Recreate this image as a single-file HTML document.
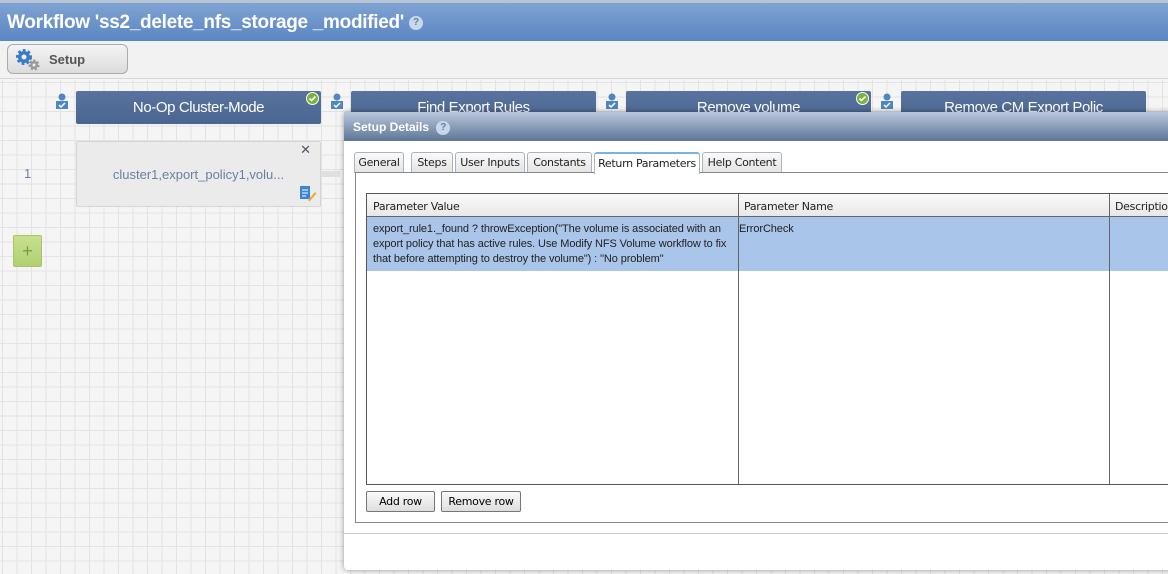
<!DOCTYPE html>
<html><head><style>
*{box-sizing:border-box;margin:0;padding:0}
body{width:1168px;height:574px;overflow:hidden;position:relative;font-family:"Liberation Sans",sans-serif;background:#f4f4f4}
.hdr{position:absolute;left:0;top:0;width:1168px;height:41px;background:linear-gradient(#7fa3d3,#5b86c2);border-top:3px solid #b7c4d4}
.hdr h1{position:absolute;left:7px;top:9px;color:#fff;font-size:19px;font-weight:bold;letter-spacing:-0.3px}
.q{display:inline-block;width:14px;height:14px;border-radius:50%;background:#c8d8ea;color:#5c7fa8;font-size:10px;font-weight:bold;text-align:center;line-height:14px;vertical-align:middle;letter-spacing:0}
.tb{position:absolute;left:0;top:41px;width:1168px;height:38px;background:#f2f2f2;border-bottom:1px solid #d8d8d8}
.setup{position:absolute;left:7px;top:3px;width:121px;height:30px;border:1px solid #aaa;border-radius:6px;background:linear-gradient(#f4f4f4,#dcdcdc);font-weight:bold;font-size:13px;color:#555}
.grid{position:absolute;left:0;top:80px;width:1168px;height:494px;background-color:#f5f5f5;background-image:linear-gradient(to right,#e3e3e3 1px,transparent 1px),linear-gradient(#e3e3e3 1px,transparent 1px);background-size:14.5px 14.5px;background-position:2px 2px}
.step{position:absolute;top:91px;height:33px;background:linear-gradient(#58749e,#4a6590);border-radius:2px;color:#fff;font-size:15px;text-align:center;line-height:34px;letter-spacing:-0.4px}
.usr{position:absolute;top:93px;width:14px;height:16px}
.ok{position:absolute;top:1px;right:2px;width:13px;height:13px}
.card{position:absolute;left:76px;top:141px;width:245px;height:66px;background:#ebebeb;border:1px solid #d5d5d5;border-radius:2px;color:#6b7fa0;font-size:13px;text-align:center;line-height:66px}
.dlg{position:absolute;left:344px;top:112px;width:830px;height:458px;background:#fff;box-shadow:0 0 6px rgba(0,0,0,.4);border-radius:4px 0 0 4px}
.dt{height:29px;background:linear-gradient(#b9c7da,#5d7598);color:#fff;font-size:12px;font-weight:bold;padding:8px 9px}
.tab{position:absolute;top:40px;height:21px;border:1px solid #a8b4c0;border-bottom:none;border-radius:3px 3px 0 0;background:linear-gradient(#fafafa,#e3e3e3);font-size:11px;color:#222;text-align:center;line-height:20px;font-family:"DejaVu Sans","Liberation Sans",sans-serif;letter-spacing:-.3px}
.panel{position:absolute;left:11px;top:60px;width:830px;height:351px;border:1px solid #888}
.tbl{position:absolute;left:10px;top:20px;width:830px;height:292px;border:1px solid #555;font-size:11px;color:#222;font-family:"DejaVu Sans","Liberation Sans",sans-serif;letter-spacing:-.3px}
.th{position:absolute;top:0;height:23px;background:linear-gradient(#fafafa,#e8e8e8);border-bottom:1px solid #666;padding:6px 6px}
.vl{position:absolute;top:0;width:1px;height:290px;background:#666}
.sel{position:absolute;left:0;top:23px;width:830px;height:54px;background:#a9c5ea}
.btn{position:absolute;top:318px;height:21px;border:1px solid #777;border-radius:2px;background:linear-gradient(#fafafa,#dedede);font-size:11px;text-align:center;line-height:19px;font-family:"DejaVu Sans","Liberation Sans",sans-serif;letter-spacing:-.3px}
.val{position:absolute;left:6px;top:28px;line-height:15px;white-space:nowrap;font-family:"Liberation Sans",sans-serif;font-size:11px;letter-spacing:-0.1px}
</style></head><body>
<div class="hdr"><h1>Workflow 'ss2_delete_nfs_storage _modified' <span class="q">?</span></h1></div>
<div class="tb"><div class="setup">
<svg style="position:absolute;left:6px;top:2px" width="28" height="26"><circle cx="10" cy="10" r="6" fill="#3a7bc8" stroke="#3a7bc8" stroke-width="4" stroke-dasharray="2.5 2"/><circle cx="10" cy="10" r="2.5" fill="#eee"/><circle cx="20" cy="18" r="4" fill="#999" stroke="#999" stroke-width="3" stroke-dasharray="2 1.6"/><circle cx="20" cy="18" r="1.5" fill="#eee"/></svg>
<span style="position:absolute;left:41px;top:7px">Setup</span></div></div>
<div class="grid"></div>
<svg class="usr" style="left:55px" viewBox="0 0 14 16"><circle cx="7" cy="4" r="3.5" fill="#4f86c0"/><rect x="1" y="8" width="12" height="8" fill="#4f86c0"/><path d="M4 12l2 2 4-4" stroke="#fff" fill="none" stroke-width="1.5"/></svg>
<svg class="usr" style="left:330px" viewBox="0 0 14 16"><circle cx="7" cy="4" r="3.5" fill="#4f86c0"/><rect x="1" y="8" width="12" height="8" fill="#4f86c0"/><path d="M4 12l2 2 4-4" stroke="#fff" fill="none" stroke-width="1.5"/></svg>
<svg class="usr" style="left:605px" viewBox="0 0 14 16"><circle cx="7" cy="4" r="3.5" fill="#4f86c0"/><rect x="1" y="8" width="12" height="8" fill="#4f86c0"/><path d="M4 12l2 2 4-4" stroke="#fff" fill="none" stroke-width="1.5"/></svg>
<svg class="usr" style="left:880px" viewBox="0 0 14 16"><circle cx="7" cy="4" r="3.5" fill="#4f86c0"/><rect x="1" y="8" width="12" height="8" fill="#4f86c0"/><path d="M4 12l2 2 4-4" stroke="#fff" fill="none" stroke-width="1.5"/></svg>
<div class="step" style="left:76px;width:245px">No-Op Cluster-Mode<svg class="ok" viewBox="0 0 13 13"><circle cx="6.5" cy="6.5" r="6" fill="#7bb33c" stroke="#fff"/><path d="M3.5 6.5l2 2 4-4" stroke="#fff" stroke-width="1.6" fill="none"/></svg></div>
<div class="step" style="left:351px;width:245px">Find Export Rules</div>
<div class="step" style="left:626px;width:245px">Remove volume<svg class="ok" viewBox="0 0 13 13"><circle cx="6.5" cy="6.5" r="6" fill="#7bb33c" stroke="#fff"/><path d="M3.5 6.5l2 2 4-4" stroke="#fff" stroke-width="1.6" fill="none"/></svg></div>
<div class="step" style="left:901px;width:245px">Remove CM Export Polic</div>
<div style="position:absolute;left:24px;top:166px;color:#6b7fa0;font-size:13px">1</div>
<div class="card">cluster1,export_policy1,volu...<span style="position:absolute;right:9px;top:-25px;color:#556;font-size:13px">✕</span>
<svg style="position:absolute;right:3px;bottom:4px" width="18" height="18"><rect x="1" y="2" width="10" height="13" fill="#3b86d4"/><path d="M3 6h6M3 9h6M3 12h4" stroke="#fff"/><path d="M9 16l7-8 1.5 1.5-7 8z" fill="#f0a830"/></svg></div>
<div style="position:absolute;left:322px;top:171px;width:18px;height:6px;background:#e0e0e0"></div>
<div style="position:absolute;left:13px;top:235px;width:29px;height:32px;border:1px solid #a7c46c;border-radius:2px;background:linear-gradient(#c9e08f,#b0d070);color:#7a9a45;font-size:18px;text-align:center;line-height:30px">+</div>
<div class="dlg">
<div class="dt">Setup Details <span class="q" style="margin-left:4px">?</span></div>
<div class="tab" style="left:10px;width:50px">General</div>
<div class="tab" style="left:67px;width:42px">Steps</div>
<div class="tab" style="left:111px;width:70px">User Inputs</div>
<div class="tab" style="left:183px;width:65px">Constants</div>
<div class="tab" style="left:250px;width:106px;background:#fff;border-top:2px solid #7bb0e0;height:22px;z-index:2">Return Parameters</div>
<div class="tab" style="left:358px;width:80px">Help Content</div>
<div class="panel">
<div class="tbl">
<div class="th" style="left:0;width:371px">Parameter Value</div>
<div class="th" style="left:371px;width:371px">Parameter Name</div>
<div class="th" style="left:742px;width:90px">Description</div>
<div class="sel"></div>
<div class="val">export_rule1._found ? throwException("The volume is associated with an<br>export policy that has active rules. Use Modify NFS Volume workflow to fix<br>that before attempting to destroy the volume") : "No problem"</div>
<div class="val" style="left:372px">ErrorCheck</div>
<div class="vl" style="left:371px"></div><div class="vl" style="left:742px"></div>
</div>
<div class="btn" style="left:10px;width:69px">Add row</div>
<div class="btn" style="left:85px;width:80px">Remove row</div>
</div>
<div style="position:absolute;left:0;top:421px;width:830px;height:1px;background:#ccc"></div>
</div>
</body></html>
